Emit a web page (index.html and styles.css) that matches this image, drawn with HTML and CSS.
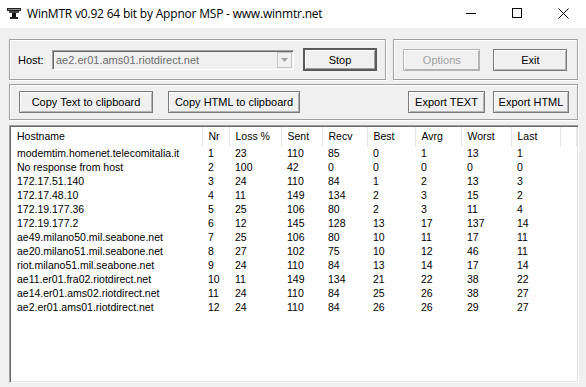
FILE: index.html
```html
<!DOCTYPE html>
<html lang="en">
<head>
  <meta charset="UTF-8">
  <title>WinMTR</title>
  <link rel="stylesheet" href="styles.css">
</head>
<body>
  <div class="window">
    <!-- 标题栏 -->
    <div class="titlebar">
      <svg class="app-icon" width="14" height="11" viewBox="0 0 14 11">
        <rect x="0" y="0" width="14" height="3" fill="#222"/>
        <rect x="1" y="1" width="12" height="1" fill="#888"/>
        <rect x="2" y="3" width="10" height="2" fill="#444"/>
        <rect x="5" y="5" width="4" height="4" fill="#111"/>
        <rect x="3" y="9" width="8" height="2" fill="#222"/>
      </svg>
      <span class="title">WinMTR v0.92 64 bit by Appnor MSP - www.winmtr.net</span>
      <div class="caption-btns">
        <span class="cap">
          <svg width="10" height="10" viewBox="0 0 10 10"><path d="M0 5.5h10" stroke="#000" stroke-width="1"/></svg>
        </span>
        <span class="cap">
          <svg width="10" height="10" viewBox="0 0 10 10"><rect x="0.5" y="0.5" width="9" height="9" fill="none" stroke="#000" stroke-width="1"/></svg>
        </span>
        <span class="cap">
          <svg width="11" height="11" viewBox="0 0 11 11"><path d="M0.5 0.5l10 10M10.5 0.5l-10 10" stroke="#000" stroke-width="1"/></svg>
        </span>
      </div>
    </div>

    <div class="client">
      <div class="top-row">
        <div class="group host-group">
          <span class="host-label">Host:</span>
          <div class="combo">
            <span class="combo-text">ae2.er01.ams01.riotdirect.net</span>
            <span class="combo-arrow">
              <svg width="7" height="4" viewBox="0 0 7 4"><path d="M0 0h7L3.5 4z" fill="#a0a0a0"/></svg>
            </span>
          </div>
          <button class="btn btn-default stop-btn">Stop</button>
        </div>
        <div class="group opt-group">
          <button class="btn btn-disabled options-btn">Options</button>
          <button class="btn exit-btn">Exit</button>
        </div>
      </div>

      <div class="group export-group">
        <button class="btn copy-text-btn">Copy Text to clipboard</button>
        <button class="btn copy-html-btn">Copy HTML to clipboard</button>
        <span class="spacer"></span>
        <button class="btn export-text-btn">Export TEXT</button>
        <button class="btn export-html-btn">Export HTML</button>
      </div>

      <!-- 结果列表 -->
      <div class="list">
        <table class="hops">
          <colgroup>
            <col class="c-host"><col class="c-nr"><col class="c-loss"><col class="c-sent"><col class="c-recv">
            <col class="c-best"><col class="c-avrg"><col class="c-worst"><col class="c-last"><col>
          </colgroup>
          <thead>
            <tr>
              <th>Hostname</th><th>Nr</th><th>Loss %</th><th>Sent</th><th>Recv</th>
              <th>Best</th><th>Avrg</th><th>Worst</th><th>Last</th><th></th>
            </tr>
          </thead>
          <tbody>
            <tr><td>modemtim.homenet.telecomitalia.it</td><td>1</td><td>23</td><td>110</td><td>85</td><td>0</td><td>1</td><td>13</td><td>1</td><td></td></tr>
            <tr><td>No response from host</td><td>2</td><td>100</td><td>42</td><td>0</td><td>0</td><td>0</td><td>0</td><td>0</td><td></td></tr>
            <tr><td>172.17.51.140</td><td>3</td><td>24</td><td>110</td><td>84</td><td>1</td><td>2</td><td>13</td><td>3</td><td></td></tr>
            <tr><td>172.17.48.10</td><td>4</td><td>11</td><td>149</td><td>134</td><td>2</td><td>3</td><td>15</td><td>2</td><td></td></tr>
            <tr><td>172.19.177.36</td><td>5</td><td>25</td><td>106</td><td>80</td><td>2</td><td>3</td><td>11</td><td>4</td><td></td></tr>
            <tr><td>172.19.177.2</td><td>6</td><td>12</td><td>145</td><td>128</td><td>13</td><td>17</td><td>137</td><td>14</td><td></td></tr>
            <tr><td>ae49.milano50.mil.seabone.net</td><td>7</td><td>25</td><td>106</td><td>80</td><td>10</td><td>11</td><td>17</td><td>11</td><td></td></tr>
            <tr><td>ae20.milano51.mil.seabone.net</td><td>8</td><td>27</td><td>102</td><td>75</td><td>10</td><td>12</td><td>46</td><td>11</td><td></td></tr>
            <tr><td>riot.milano51.mil.seabone.net</td><td>9</td><td>24</td><td>110</td><td>84</td><td>13</td><td>14</td><td>17</td><td>14</td><td></td></tr>
            <tr><td>ae11.er01.fra02.riotdirect.net</td><td>10</td><td>11</td><td>149</td><td>134</td><td>21</td><td>22</td><td>38</td><td>22</td><td></td></tr>
            <tr><td>ae14.er01.ams02.riotdirect.net</td><td>11</td><td>24</td><td>110</td><td>84</td><td>25</td><td>26</td><td>38</td><td>27</td><td></td></tr>
            <tr><td>ae2.er01.ams01.riotdirect.net</td><td>12</td><td>24</td><td>110</td><td>84</td><td>26</td><td>26</td><td>29</td><td>27</td><td></td></tr>
          </tbody>
        </table>
      </div>
    </div>
  </div>
</body>
</html>
```

FILE: styles.css
```css
/* 窗口整体 */
body {
  margin: 0;
  padding: 0;
  background-color: #F0F0F0;
  font-family: 'Liberation Sans', Arial, sans-serif;
  font-size: 11px;
  color: #000000;
}

.window {
  width: 586px;
  height: 387px;
  overflow: hidden;
}

/* 标题栏 */
.titlebar {
  display: flex;
  align-items: center;
  height: 26px;
  padding-bottom: 2px;
  background-color: #FFFFFF;
}

.app-icon {
  margin-left: 7px;
  margin-right: 6px;
}

.title {
  flex: 1;
  font-family: 'Open Sans', 'Liberation Sans', sans-serif;
  font-size: 12px;
  letter-spacing: -0.2px;
}

.caption-btns {
  display: flex;
  align-self: stretch;
}

.cap {
  width: 46px;
  display: flex;
  align-items: center;
  justify-content: center;
}

/* 主区域 */
.client {
  padding: 11px 8px 0 9px;
}

.top-row {
  display: flex;
  gap: 7px;
}

/* 分组框（蚀刻边框） */
.group {
  display: flex;
  align-items: center;
  box-sizing: border-box;
  border: 1px solid #A0A0A0;
  box-shadow: inset 1px 1px 0 #FFFFFF, 1px 1px 0 #FFFFFF;
}

.host-group {
  width: 378px;
  height: 41px;
  padding: 0 8px;
}

.opt-group {
  width: 185px;
  height: 41px;
  padding: 0 9px;
  gap: 13px;
}

.export-group {
  margin-top: 4px;
  height: 36px;
  padding: 0 8px 0 9px;
}

.host-label {
  width: 34px;
}

/* 下拉框（禁用状态） */
.combo {
  width: 242px;
  height: 20px;
  box-sizing: border-box;
  display: flex;
  align-items: center;
  border: 1px solid #A0A0A0;
  border-color: #A0A0A0 #FFFFFF #FFFFFF #A0A0A0;
  box-shadow: inset 1px 1px 0 #696969;
  background-color: #F0F0F0;
  margin-right: 9px;
  padding: 1px 1px 1px 3px;
}

.combo-text {
  flex: 1;
  color: #6D6D6D;
}

.combo-arrow {
  width: 15px;
  height: 16px;
  box-sizing: border-box;
  display: flex;
  align-items: center;
  justify-content: center;
  border: 1px solid #C8C8C8;
  background-color: #F0F0F0;
}

/* 按钮 */
.btn {
  height: 22px;
  box-sizing: border-box;
  padding: 0;
  font-family: 'Liberation Sans', Arial, sans-serif;
  font-size: 11px;
  color: #000000;
  background-color: #F0F0F0;
  border: 1px solid #7A7A7A;
  box-shadow: inset 1px 1px 0 #FFFFFF, inset -1px -1px 0 #B4B4B4;
}

.btn-default {
  border: 2px solid #5A5A5A;
  box-shadow: inset 1px 1px 0 #FFFFFF, inset -1px -1px 0 #A0A0A0;
}

.btn-disabled {
  color: #A0A0A0;
  border-color: #B4B4B4;
}

.stop-btn { width: 74px; height: 23px; }
.options-btn { width: 77px; }
.exit-btn { width: 74px; }
.copy-text-btn { width: 134px; }
.copy-html-btn { width: 132px; margin-left: 15px; }
.spacer { flex: 1; }
.export-text-btn { width: 77px; margin-right: 8px; }
.export-html-btn { width: 76px; }

/* 结果列表 */
.list {
  margin-top: 5px;
  width: 570px;
  height: 258px;
  box-sizing: border-box;
  background-color: #FFFFFF;
  border: 1px solid;
  border-color: #A0A0A0 #FFFFFF #FFFFFF #A0A0A0;
  box-shadow: inset 1px 1px 0 #696969, inset -1px -1px 0 #E3E3E3;
  padding: 1px 0 0 1px;
  overflow: hidden;
}

.hops {
  width: 566px;
  table-layout: fixed;
  border-collapse: collapse;
  border-spacing: 0;
  font-size: 10.5px;
}

.c-host { width: 191px; }
.c-nr { width: 27px; }
.c-loss { width: 52px; }
.c-sent { width: 41px; }
.c-recv { width: 45px; }
.c-best { width: 48px; }
.c-avrg { width: 46px; }
.c-worst { width: 50px; }
.c-last { width: 49px; }

.hops th {
  height: 18px;
  padding: 0 0 1px 6px;
  text-align: left;
  font-weight: normal;
  border-right: 1px solid #E5E5E5;
  white-space: nowrap;
  overflow: hidden;
}

.hops td {
  height: 14px;
  padding: 0 0 0 6px;
  white-space: nowrap;
  overflow: hidden;
  line-height: 14px;
}
```
